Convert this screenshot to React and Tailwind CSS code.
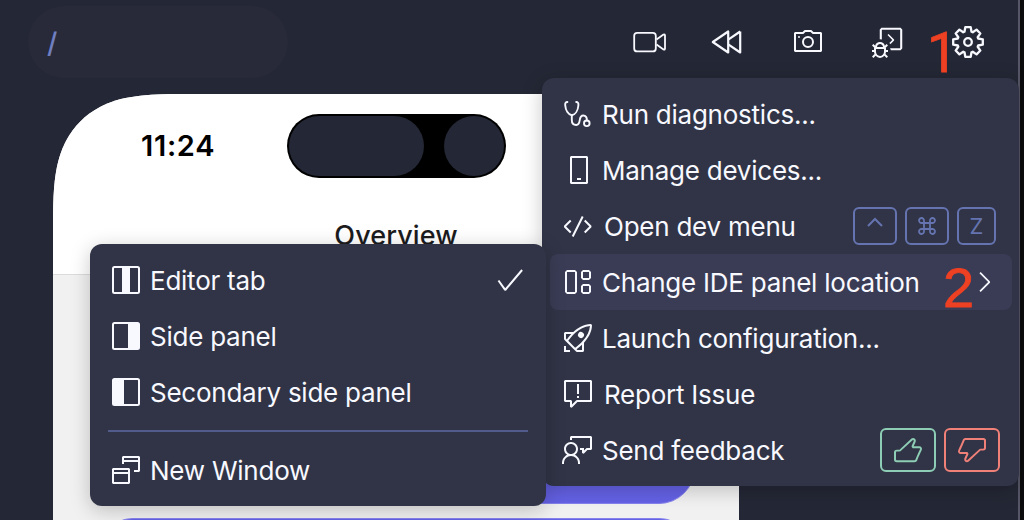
import {
  VscDeviceCamera,
  VscDeviceMobile,
  VscCode,
  VscLayout,
  VscRocket,
  VscReport,
  VscFeedback,
  VscThumbsup,
  VscThumbsdown,
  VscCheck,
  VscChevronRight,
  VscMultipleWindows,
  VscDebugConsole,
} from "react-icons/vsc";

function VideoIcon() {
  return (
    <svg width="34" height="32" viewBox="0 0 34 32" fill="none" stroke="currentColor" strokeWidth="1.8" strokeLinejoin="round">
      <rect x="1.2" y="6.8" width="21.6" height="18.6" rx="3" />
      <path d="M23.5 13.6L30.5 8.6Q32 8 32 9.6V22.6Q32 24.2 30.5 23.4L23.5 18.6" />
    </svg>
  );
}

function RewindIcon() {
  return (
    <svg width="32" height="32" viewBox="0 0 32 32" fill="none" stroke="currentColor" strokeWidth="2.2" strokeLinejoin="round">
      <path d="M17.2 5.5V26.5L1.8 16Z" />
      <path d="M29.2 5.5V26.5L17.6 18.6M17.6 13.4L29.2 5.5" />
    </svg>
  );
}

const gearPoints = Array.from({ length: 8 }, (_, i) => {
  const a = (i * Math.PI) / 4;
  return [[-3.5, -10.2], [-2.7, -14.8], [2.7, -14.8], [3.5, -10.2]]
    .map(([x, y]) => `${(x * Math.cos(a) - y * Math.sin(a)).toFixed(2)},${(x * Math.sin(a) + y * Math.cos(a)).toFixed(2)}`)
    .join(" ");
}).join(" ");

function GearIcon() {
  return (
    <svg width="32" height="32" viewBox="-16 -16 32 32" fill="none" stroke="currentColor" strokeWidth="2.3" strokeLinejoin="round">
      <polygon points={gearPoints} />
      <circle r="3.8" />
    </svg>
  );
}

function StethoscopeIcon() {
  return (
    <svg width="32" height="32" viewBox="0 0 32 32" fill="none" stroke="currentColor" strokeWidth="1.9" strokeLinecap="round">
      <path d="M5.4 4C3.8 4 3 5 3.2 7.2C3.6 12.5 6.4 16.5 9.8 17.2C13.2 16.5 16 12.5 16.4 7.2C16.6 5 15.8 4 14.2 4" />
      <path d="M9.8 17.2V22C9.8 25.5 11.3 27 14.2 27C20 27 15.5 17.5 21.2 17.5C23.8 17.5 25 19.4 24.9 22.5" />
      <circle cx="24.8" cy="25.3" r="2.8" />
    </svg>
  );
}

function PanelIcon({ x, width }) {
  return (
    <svg width="32" height="32" viewBox="0 0 32 32">
      <rect x="3" y="3" width="26" height="26" rx="1.5" fill="none" stroke="currentColor" strokeWidth="2" />
      <rect x={x} y="3" width={width} height="26" fill="currentColor" />
    </svg>
  );
}

function Row({ icon, label, wide, active, children }) {
  return (
    <div className={`flex h-14 items-center rounded-lg pr-4 pl-3 ${active ? "bg-[#3a3c55]" : ""}`}>
      <span className="flex w-8 shrink-0 text-[32px]">{icon}</span>
      <span className={`pt-0.5 text-[26px] leading-8 tracking-[-0.24px] whitespace-nowrap [font-weight:430] ${wide ? "ml-2.5" : "ml-2"}`}>{label}</span>
      {children}
    </div>
  );
}

function Key({ className, children }) {
  return (
    <span className={`flex h-[38px] items-center justify-center rounded-md border-2 border-[#6574b0] text-[22px] text-[#6574b0] ${className}`}>
      {children}
    </span>
  );
}

export default function App() {
  return (
    <div className="relative flex h-[520px] w-[1024px] overflow-hidden bg-[#0b0b0d] font-['Inter',sans-serif] text-[#f8f8ff]">
      <main className="flex w-[1020px] flex-col border-r-2 border-[#575666] bg-[#242735]">
        <header className="flex h-[94px] shrink-0 items-start justify-between pt-1.5 pr-[34px] pl-7">
          <div className="flex h-[72px] w-[260px] items-center rounded-full bg-[#282a3a] pl-[19px] text-[28px] font-medium text-[#6f7fc0]">
            <span className="pt-px">/</span>
          </div>
          <div className="flex h-[72px] items-center text-[32px]">
            <span className="mr-[44px]"><VideoIcon /></span>
            <span className="mr-[49px]"><RewindIcon /></span>
            <VscDeviceCamera className="mr-[48px]" />
            <VscDebugConsole className="mr-[48px]" />
            <GearIcon />
          </div>
        </header>

        <section className="ml-[53px] flex h-[426px] w-[686px] flex-col overflow-hidden bg-[#f1f1f1] text-black [clip-path:path('M0_426V130C0_92_2_68_13_47C21_32_32_21_47_13C68_2_92_0_130_0H686V426Z')]">
          <div className="flex h-[181px] shrink-0 flex-col border-b border-[#dcdcdc] bg-white">
            <div className="flex h-[104px] items-center pl-[88px]">
              <span className="w-[146px] text-[29px] font-semibold tracking-[0.7px]">11:24</span>
              <div className="-mt-px flex h-16 w-[219px] items-center justify-between rounded-full bg-black px-[2px]">
                <span className="h-[60px] w-[135px] rounded-full bg-[#242735]" />
                <span className="size-[60px] rounded-full bg-[#242735]" />
              </div>
            </div>
            <h1 className="pt-[20px] text-center text-[27px] leading-9 font-medium tracking-[0.1px] text-[#1c1c1e]">Overview</h1>
          </div>
          <div className="mt-[157px] flex flex-col items-center gap-[14px]">
            <div className="h-[72px] w-[598px] shrink-0 rounded-full border border-[#8582ee] bg-[#6562e6]" />
            <div className="h-[72px] w-[598px] shrink-0 rounded-full border border-[#8582ee] bg-[#6562e6]" />
          </div>
        </section>
      </main>

      <nav className="absolute top-[78px] left-[542px] flex h-[408px] w-[477px] flex-col rounded-xl bg-[#303446] py-2 pr-[7px] pl-2 shadow-[0_4px_20px_rgba(0,0,0,0.22)]">
        <Row icon={<StethoscopeIcon />} label="Run diagnostics..." />
        <Row icon={<VscDeviceMobile />} label="Manage devices..." />
        <Row icon={<VscCode />} label="Open dev menu" wide>
          <div className="ml-auto flex gap-2">
            <Key className="w-11">
              <svg width="16" height="20" viewBox="0 0 16 20" fill="none" stroke="currentColor" strokeWidth="2">
                <path d="M1 10L8 3L15 10" />
              </svg>
            </Key>
            <Key className="w-11">
              <svg width="18" height="18" viewBox="0 0 18 18" fill="none" stroke="currentColor" strokeWidth="1.8">
                <path d="M6 6H12V12H6ZM6 6H3.7A2.5 2.5 0 1 1 6 3.7ZM12 6V3.7A2.5 2.5 0 1 1 14.3 6ZM12 12H14.3A2.5 2.5 0 1 1 12 14.3ZM6 12V14.3A2.5 2.5 0 1 1 3.7 12Z" />
              </svg>
            </Key>
            <Key className="w-[39px]">Z</Key>
          </div>
        </Row>
        <Row icon={<VscLayout className="-ml-px" />} label="Change IDE panel location" active>
          <VscChevronRight className="-mr-1 ml-auto shrink-0 text-[32px]" />
        </Row>
        <Row icon={<VscRocket />} label="Launch configuration..." />
        <Row icon={<VscReport />} label="Report Issue" wide />
        <Row icon={<VscFeedback />} label="Send feedback">
          <div className="-mr-1 ml-auto flex gap-2 text-[32px]">
            <span className="flex h-11 w-14 items-center justify-center rounded-md border-2 border-[#8ecdb5] text-[#8ecdb5]"><VscThumbsup /></span>
            <span className="flex h-11 w-14 items-center justify-center rounded-md border-2 border-[#f08078] text-[#f08078]"><VscThumbsdown /></span>
          </div>
        </Row>
      </nav>

      <nav className="absolute top-[244px] left-[90px] flex h-[262px] w-[456px] flex-col rounded-xl bg-[#303446] p-2 shadow-[0_4px_20px_rgba(0,0,0,0.22)]">
        <Row icon={<PanelIcon x={12} width={8} />} label="Editor tab">
          <VscCheck className="-mr-1 ml-auto text-[32px]" />
        </Row>
        <Row icon={<PanelIcon x={18} width={11} />} label="Side panel" />
        <Row icon={<PanelIcon x={3} width={11} />} label="Secondary side panel" />
        <hr className="mx-2.5 my-2.5 h-0.5 border-0 bg-[#525c8c]" />
        <Row icon={<VscMultipleWindows />} label="New Window" />
      </nav>

      <span className="absolute top-[25px] left-[927px] font-['Roboto',sans-serif] text-[55px] leading-[56px] text-[#ee4023] [-webkit-text-stroke:0.8px_#ee4023]">1</span>
      <span className="absolute top-[260px] left-[943px] font-['Liberation_Sans',sans-serif] text-[56px] leading-[56px] text-[#ee4023] [-webkit-text-stroke:0.8px_#ee4023]">2</span>
    </div>
  );
}
